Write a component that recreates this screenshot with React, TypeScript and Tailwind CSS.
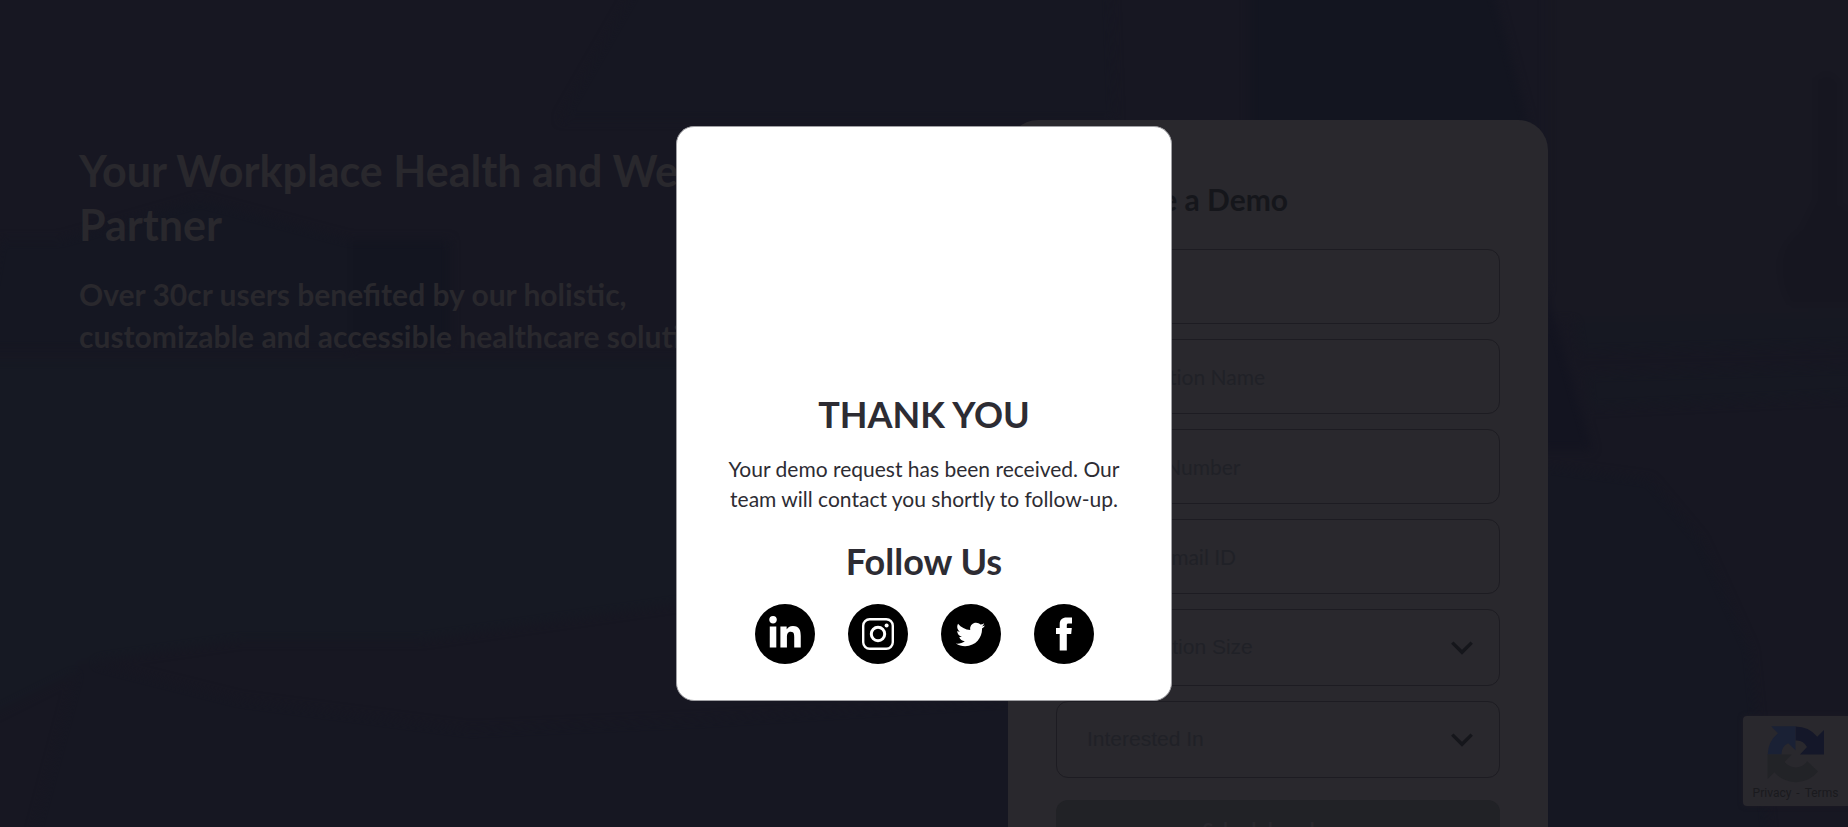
import { FaLinkedinIn, FaTwitter } from 'react-icons/fa';

const fieldClass =
  'block w-full rounded-xl border border-[#1d1c22] bg-transparent px-[30px] text-[#202127] placeholder:text-[#202127] outline-none';

function TextField({ id, label, type = 'text' }: { id: string; label: string; type?: string }) {
  return (
    <div>
      <label htmlFor={id} className="sr-only">{label}</label>
      <input
        id={id}
        type={type}
        placeholder={label}
        className={`${fieldClass} h-[75px] text-[21px] [font-variant-ligatures:none]`}
      />
    </div>
  );
}

function SelectField({ id, label }: { id: string; label: string }) {
  return (
    <div className="grid items-center">
      <label htmlFor={id} className="sr-only">{label}</label>
      <select
        id={id}
        defaultValue=""
        className={`${fieldClass} col-start-1 row-start-1 h-[77px] appearance-none pb-[2px] font-['Liberation_Sans',sans-serif] text-[21px]`}
      >
        <option value="">{label}</option>
      </select>
      <svg
        viewBox="0 0 22 14"
        className="pointer-events-none col-start-1 row-start-1 mr-[27px] h-[14px] w-[22px] justify-self-end"
        fill="none"
        stroke="#15161b"
        strokeWidth="3.4"
        aria-hidden="true"
      >
        <path d="M1.3 1.6 L11 11.3 L20.7 1.6" />
      </svg>
    </div>
  );
}

function Backdrop() {
  return (
    <svg
      className="absolute inset-0 h-full w-full"
      viewBox="0 0 1848 827"
      preserveAspectRatio="none"
      aria-hidden="true"
    >
      <defs>
        <filter id="soft" x="-10%" y="-10%" width="120%" height="120%" colorInterpolationFilters="sRGB">
          <feGaussianBlur stdDeviation="5" />
        </filter>
      </defs>
      <rect width="1848" height="827" fill="#171722" />
      <g filter="url(#soft)">
        <path d="M-20 360H1020V560L700 600L420 640L240 640L100 660L-20 720Z" fill="#161923" />
        <path d="M0 240H60L200 200L350 240V350H-20Z" fill="#151722" />
        <path d="M350 240H450V345H350Z" fill="#131520" />
        <path d="M640 -20H1110L1115 120H560Z" fill="#161722" />
        <path d="M1250 -20H1490L1530 130H1250Z" fill="#131520" />
        <path d="M1548 -20H1868V320H1548Z" fill="#181822" />
        <path d="M1540 270L1592 450H1540Z" fill="#131420" />
        <path d="M1575 320L1868 315V345L1580 352ZM1585 374L1868 366V395L1590 408Z" fill="#161822" />
        <path d="M1540 465L1650 480L1700 540L1750 650L1770 847H1540Z" fill="#151722" />
        <path d="M1815 80Q1830 65 1840 85V205L1868 220V305H1790Q1765 255 1800 230L1815 200Z" fill="#161620" />
        <path d="M80 660L240 700L470 730L700 720L1020 700V847H30Z" fill="#161722" />
      </g>
    </svg>
  );
}

function Recaptcha() {
  return (
    <aside className="absolute right-0 bottom-[21px] flex h-[90px] w-[105px] flex-col items-center rounded-l-[4px] bg-[#29282d] pt-[10px] shadow-[0_0_5px_#1d1b25]">
      <svg viewBox="0 0 64 64" className="h-[57px] w-[57px]" aria-hidden="true">
        <path
          d="M64 32V4.6L56.4 12.2A31.6 31.6 0 0 0 32 .7V16.3A13 13 0 0 1 44.9 23.7L37 31.9Z"
          fill="#141729"
        />
        <path
          d="M32 .3H4.7L12.3 8A31.6 31.6 0 0 0 .8 32H16.4A13 13 0 0 1 23.8 19.3L32 27.3Z"
          fill="#1a2135"
        />
        <path
          d="M.7 32V59.4L8.3 51.8A31.6 31.6 0 0 0 57.2 51.2L45.2 39.6A15.5 15.5 0 0 1 19.7 40.2L27.7 32Z"
          fill="#222327"
        />
      </svg>
      <p className="font-[Roboto,sans-serif] text-[12px] leading-[20px] text-[#1a1a1e]">
        <a href="#privacy">Privacy</a>
        <span className="px-[2px]"> - </span>
        <a href="#terms">Terms</a>
      </p>
    </aside>
  );
}

const socialClass = 'flex size-[60px] items-center justify-center rounded-full bg-black text-white';

function ThankYouDialog() {
  return (
    <div className="fixed inset-0 flex items-center justify-center">
      <section
        role="dialog"
        aria-modal="true"
        aria-labelledby="thanks"
        className="flex w-[496px] flex-col items-center rounded-[18px] border border-[#a0a0a4] bg-white px-[46px] pb-[36px] text-center text-[#2d2c33]"
      >
        <div className="h-[263px]" />
        <h2 id="thanks" className="text-[36px] leading-[48px] font-bold">THANK YOU</h2>
        <p className="mt-[16px] text-[21px] leading-[30px]">
          Your demo request has been received. Our team will contact you shortly to follow-up.
        </p>
        <h3 className="mt-[23px] text-[36px] leading-[48px] font-bold">Follow Us</h3>
        <nav className="mt-[19px] flex gap-[33px]" aria-label="Social media">
          <a href="#linkedin" aria-label="LinkedIn" className={socialClass}>
            <FaLinkedinIn className="size-[36px]" />
          </a>
          <a href="#instagram" aria-label="Instagram" className={socialClass}>
            <svg viewBox="0 0 32 32" className="size-[32px]" fill="none" stroke="currentColor" aria-hidden="true">
              <rect x="1.2" y="1.2" width="29.6" height="29.6" rx="6.5" strokeWidth="2.4" />
              <circle cx="16" cy="16" r="6.7" strokeWidth="3" />
              <circle cx="24.6" cy="7.4" r="2" fill="currentColor" stroke="none" />
            </svg>
          </a>
          <a href="#twitter" aria-label="Twitter" className={socialClass}>
            <FaTwitter className="size-[29px]" />
          </a>
          <a href="#facebook" aria-label="Facebook" className={socialClass}>
            <svg viewBox="0 0 16 34" className="h-[34px] w-[16px]" fill="currentColor" aria-hidden="true">
              <path d="M3.7 33.5V17H0V11H3.7V7.2C3.7 2.8 6.4 .6 10.5 .6H16V6.4H12.6C11.2 6.4 10.8 7 10.8 8.2V11H15.8L15.2 17H10.8V33.5Z" />
            </svg>
          </a>
        </nav>
      </section>
    </div>
  );
}

export default function App() {
  return (
    <div className="relative h-screen overflow-hidden bg-[#171722] font-[Lato,sans-serif]">
      <Backdrop />
      <main className="relative flex items-start justify-between pt-[120px] pr-[300px] pl-[79px]">
        <div className="w-[760px] pt-[24px] font-bold text-[#29282d]">
          <h1 className="text-[43px] leading-[54px]">Your Workplace Health and Wellness Partner</h1>
          <h2 className="mt-[21px] w-[660px] text-[30px] leading-[42px]">
            Over 30cr users benefited by our holistic, customizable and accessible healthcare solutions
          </h2>
        </div>
        <form
          className="w-[540px] shrink-0 rounded-[30px] bg-[#29282d] px-[48px] pt-[59px] pb-[48px]"
          onSubmit={(event) => event.preventDefault()}
        >
          <h2 className="text-[30px] leading-[40px] font-bold text-[#15161b]">Schedule a Demo</h2>
          <div className="mt-[30px] flex flex-col gap-[15px]">
            <TextField id="name" label="Name" />
            <TextField id="organization" label="Organization Name" />
            <TextField id="contact" label="Contact Number" type="tel" />
            <TextField id="email" label="Official Email ID" type="email" />
            <SelectField id="size" label="Organization Size" />
            <SelectField id="interest" label="Interested In" />
          </div>
          <button type="submit" className="mt-[22px] h-[60px] w-full rounded-xl bg-[#212226] text-[20px] font-bold text-[#29282d]">
            Schedule a demo
          </button>
        </form>
      </main>
      <Recaptcha />
      <ThankYouDialog />
    </div>
  );
}
